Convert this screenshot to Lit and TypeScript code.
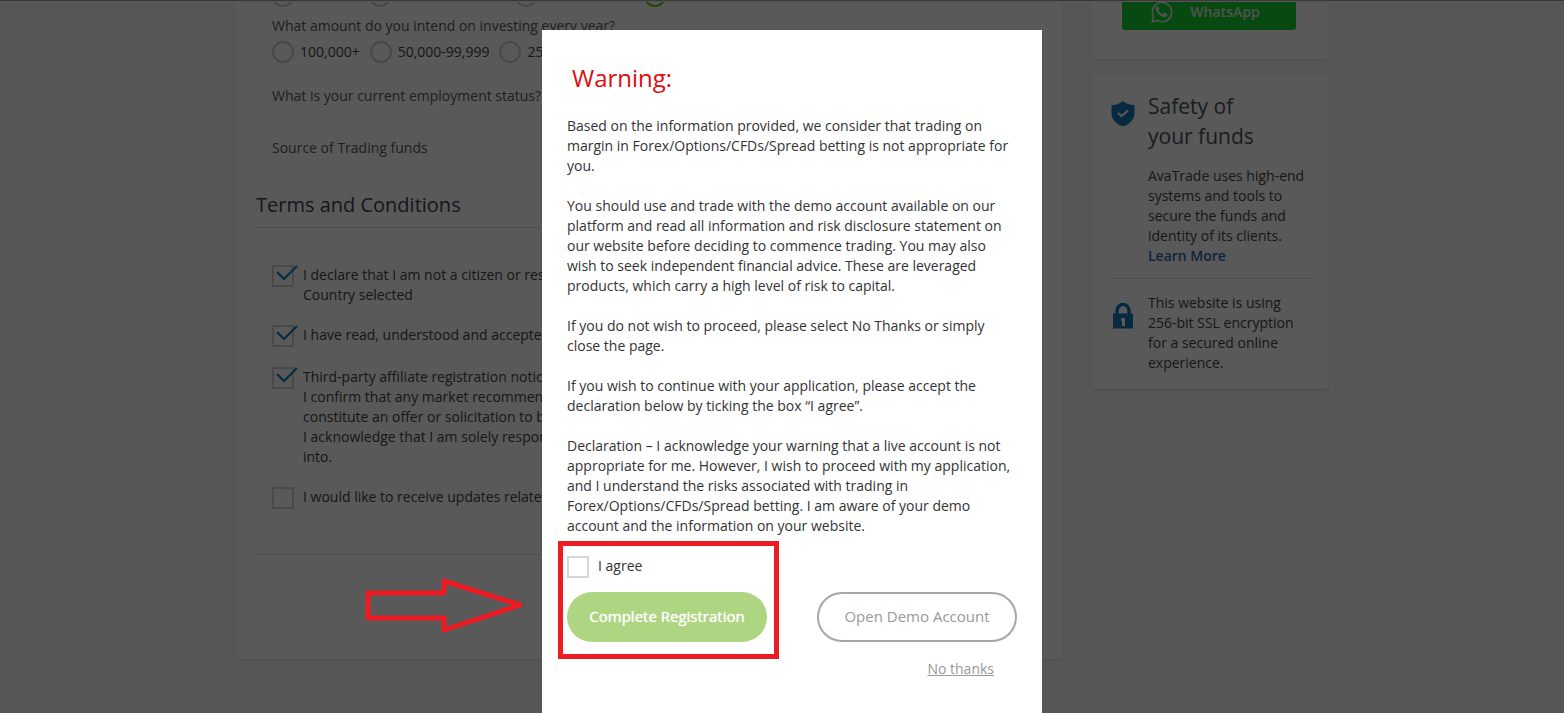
import { LitElement, html, css, svg } from "lit";
import { customElement, property, state } from "lit/decorators.js";

const base = css`
  *, *::before, *::after { box-sizing: border-box; }
  h2, h3, p { margin: 0; font-weight: 400; }
`;

@customElement("choice-row")
class ChoiceRow extends LitElement {
  @property() name = "";
  @property({ type: Array }) options: string[] = [];

  static styles = [base, css`
    :host { display: flex; gap: 10px; white-space: nowrap; }
    .choice { display: flex; align-items: center; gap: 6px; height: 22px; }
    .radio {
      appearance: none; flex: none; margin: 0;
      width: 22px; height: 22px; border: 2px solid #cdcdcd; border-radius: 50%;
    }
  `];

  render() {
    return this.options.map((text) => html`
      <label class="choice">
        <input class="radio" type="radio" name=${this.name} />
        <span>${text}</span>
      </label>`);
  }
}

@customElement("tick-item")
class TickItem extends LitElement {
  @property({ type: Boolean }) checked = false;

  static styles = [base, css`
    :host { display: block; }
    .item { display: grid; grid-template-columns: 22px 1fr; gap: 9px; }
    .box { position: relative; height: 22px; }
    .input {
      appearance: none; display: block; margin: 0;
      width: 22px; height: 22px; border: 2px solid #d2d2d2; background: transparent;
    }
    .mark { position: absolute; left: 4px; top: 0; width: 22px; height: 17px; display: none; pointer-events: none; }
    .input:checked + .mark { display: block; }
    .text { line-height: 20px; }
  `];

  render() {
    return html`
      <label class="item">
        <span class="box">
          <input class="input" type="checkbox" .checked=${this.checked} />
          <svg class="mark" viewBox="0 0 22 17" fill="none" stroke="#1779ba" stroke-width="2">
            <path d="M1 7 L8 14 L21 1" />
          </svg>
        </span>
        <span class="text"><slot></slot></span>
      </label>`;
  }
}

const whatsapp = svg`
  <path d="M2 22 L3.6 16.5 A9.6 9.6 0 1 1 7.4 20.4 Z" fill="none" stroke="#e4ece4" stroke-width="1.6" stroke-linejoin="round"/>
  <path d="M8.3 6.8c-.3-.6-.6-.6-.9-.6-.8 0-1.7.9-1.7 2.300 0 3.700 5 8.300 8.700 8.500 1.600 0 2.800-.9 3-2.300.1-.6 0-.8-.4-1l-2.200-1.100c-.4-.2-.7-.1-.9.2l-.9 1.100c-.2.3-.5.3-.8.1-1.900-.8-3-2.100-3.700-3.400-.2-.3 0-.5.2-.7.500-.5.900-1 .7-1.400z" fill="#e4ece4"/>`;

@customElement("safety-panel")
class SafetyPanel extends LitElement {
  static styles = [base, css`
    :host { display: flex; flex-direction: column; gap: 16px; }
    .card { background: #fff; border-radius: 3px; box-shadow: 0 1px 3px rgba(0, 0, 0, 0.1); }
    .contact { padding: 0 32px 29px 30px; border-radius: 0 0 3px 3px; }
    .whatsapp {
      display: flex; align-items: flex-end; justify-content: center; gap: 16px;
      width: 100%; height: 28px; padding: 0 8px 6px 0; border: 0; border-radius: 0 0 3px 3px;
      background: #14d133; color: #e4ece4; font: 600 14px/24px "Open Sans", sans-serif;
    }
    .phone { width: 24px; height: 24px; }
    .funds { padding: 16px 16px 16px; }
    .entry { display: grid; grid-template-columns: 30px 1fr; gap: 10px; line-height: 20px; }
    .entry + .entry { margin-top: 12px; padding-top: 14px; border-top: 1px solid #dcdcdc; }
    .icon { display: block; width: 24px; height: 26px; margin: 10px 0 0 3px; }
    .title { font-size: 21px; line-height: 30px; color: #4a535e; margin-bottom: 15px; }
    .link { font-weight: 600; color: #2c68a8; text-decoration: none; }
  `];

  render() {
    return html`
      <section class="card contact">
        <button class="whatsapp">
          <svg class="phone" viewBox="0 0 24 24">${whatsapp}</svg>WhatsApp
        </button>
      </section>
      <section class="card funds">
        <div class="entry">
          <svg class="icon" viewBox="0 0 24 26">
            <path d="M12 0C9 2.500 5.500 4 0.500 4.200V12C0.500 18.500 5 23 12 25.500C19 23 23.500 18.500 23.500 12V4.200C18.500 4 15 2.500 12 0Z" fill="#1779ba"/>
            <path d="M7 12 L10.500 15 L17 9.500" fill="none" stroke="#fff" stroke-width="2"/>
          </svg>
          <div>
            <h3 class="title">Safety of<br />your funds</h3>
            <p>AvaTrade uses high-end systems and tools to secure the funds and identity of its clients.
              <a class="link" href="#security">Learn More</a></p>
          </div>
        </div>
        <div class="entry">
          <svg class="icon" viewBox="0 0 24 26">
            <path d="M6 12V8A6 6.500 0 0 1 18 8V12" fill="none" stroke="#1779ba" stroke-width="3.500"/>
            <rect x="2" y="10.500" width="20" height="15" fill="#1779ba"/>
            <path d="M10 15h4v8h-3v-5h-1z" fill="#fff"/>
          </svg>
          <p>This website is using 256-bit SSL encryption for a secured online experience.</p>
        </div>
      </section>`;
  }
}

@customElement("warning-dialog")
class WarningDialog extends LitElement {
  @state() private agreed = false;

  static styles = [base, css`
    :host {
      display: block; width: 500px; padding: 30px 25px 34px 25px;
      background: #fff; color: #333; font-size: 14px; line-height: 20px;
    }
    .title { margin-left: 5px; font-size: 24px; line-height: 36px; color: #e00b0b; }
    .copy { display: flex; flex-direction: column; gap: 20px; margin-top: 20px; }
    .actions { display: flex; justify-content: space-between; align-items: flex-end; margin-top: 5px; }
    .marked { margin: 0 0 -17px -9px; padding: 10px 7px 12px 4px; border: 5px solid #ed1c24; }
    .agree { display: flex; gap: 9px; height: 22px; margin-bottom: 14px; }
    .agree input { appearance: none; margin: 0; width: 22px; height: 22px; border: 2px solid #d6d6d6; }
    .button {
      display: block; width: 200px; height: 50px; padding: 0 0 2px; border-radius: 25px;
      font: 400 15px/20px "Open Sans", sans-serif; cursor: pointer;
    }
    .complete { border: 0; background: #aed581; color: #fff; text-shadow: 0 0 1px #fff; }
    .demo { border: 2px solid #a6a6a6; background: #fff; color: #999; }
    .foot { display: flex; justify-content: flex-end; margin-top: 17px; padding-right: 23px; }
    .foot a { color: #999; }
  `];

  render() {
    return html`
      <h2 class="title">Warning:</h2>
      <div class="copy">
        <p>Based on the information provided, we consider that trading on margin in Forex/Options/CFDs/Spread betting is not appropriate for you.</p>
        <p>You should use and trade with the demo account available on our platform and read all information and risk disclosure statement on our website before deciding to commence trading. You may also wish to seek independent financial advice. These are leveraged products, which carry a high level of risk to capital.</p>
        <p>If you do not wish to proceed, please select No Thanks or simply close the page.</p>
        <p>If you wish to continue with your application, please accept the declaration below by ticking the box “I agree”.</p>
        <p>Declaration – I acknowledge your warning that a live account is not appropriate for me. However, I wish to proceed with my application, and I understand the risks associated with trading in Forex/Options/CFDs/Spread betting. I am aware of your demo account and the information on your website.</p>
      </div>
      <div class="actions">
        <div class="marked">
          <label class="agree">
            <input type="checkbox" .checked=${this.agreed}
              @change=${(e: Event) => (this.agreed = (e.target as HTMLInputElement).checked)} />
            <span>I agree</span>
          </label>
          <button class="button complete">Complete Registration</button>
        </div>
        <button class="button demo">Open Demo Account</button>
      </div>
      <div class="foot"><a href="#no">No thanks</a></div>`;
  }
}

@customElement("app-root")
class AppRoot extends LitElement {
  static styles = [base, css`
    :host {
      display: block; position: relative; min-height: 100vh; overflow: hidden;
      background: #f3f8f6; color: #444; font: 14px/20px "Open Sans", sans-serif;
      border-top: 1px solid #39393c;
    }
    .page {
      display: grid; grid-template-columns: 1fr 236px; gap: 30px; align-items: start;
      max-width: 1092px; margin: 0 auto; padding-top: 1px;
    }
    .form {
      padding: 0 20px 104px; background: #fff; border-radius: 0 0 3px 3px;
      box-shadow: 0 1px 3px rgba(0, 0, 0, 0.1);
    }
    .questions { padding-left: 16px; }
    .clipped {
      display: grid; grid-template-columns: 97px 146px 129px 22px; align-content: end;
      height: 5px; overflow: hidden;
    }
    .radio {
      appearance: none; margin: 0; width: 22px; height: 22px;
      border: 2px solid #cdcdcd; border-radius: 50%;
    }
    .radio:checked { border-color: #6dbb1a; }
    .question { margin-top: 9px; color: #5a5a5a; }
    .status { margin-top: 23px; color: #5a5a5a; }
    .source { margin-top: 32px; color: #5a5a5a; }
    .amounts { margin-top: 5px; }
    .heading {
      margin-top: 32px; padding-bottom: 7px; border-bottom: 1px solid #dcdcdc;
      font-size: 20px; line-height: 30px; color: #3c444c;
    }
    .terms { display: flex; flex-direction: column; gap: 20px; padding: 37px 16px 45px; border-bottom: 1px solid #dcdcdc; }
    .overlay {
      position: absolute; inset: 0; display: flex; justify-content: center; align-items: flex-start;
      padding: 29px 0 0 20px; background: rgba(0, 0, 0, 0.65);
    }
    .arrow { position: absolute; left: calc(50% - 418px); top: 576px; width: 160px; height: 56px; }
  `];

  render() {
    return html`
      <main class="page">
        <form class="form" @submit=${(e: Event) => e.preventDefault()}>
          <div class="questions">
            <div class="clipped">
              ${["500,000+", "100,000-499,999", "50,000-99,999", "0-49,999"].map((range, i) => html`
                <input class="radio" type="radio" name="savings" aria-label=${range} .checked=${i === 3} />`)}
            </div>
            <p class="question">What amount do you intend on investing every year?</p>
            <choice-row class="amounts" name="amount"
              .options=${["100,000+", "50,000-99,999", "25,000-49,999"]}></choice-row>
            <p class="status">What is your current employment status?</p>
            <p class="source">Source of Trading funds</p>
          </div>
          <h2 class="heading">Terms and Conditions</h2>
          <div class="terms">
            <tick-item checked>I declare that I am not a citizen or resident<br />Country selected</tick-item>
            <tick-item checked>I have read, understood and accepted</tick-item>
            <tick-item checked>Third-party affiliate registration notice<br />I confirm that any market recommendation<br />constitute an offer or solicitation to buy<br />I acknowledge that I am solely responsible<br />into.</tick-item>
            <tick-item>I would like to receive updates related</tick-item>
          </div>
        </form>
        <safety-panel></safety-panel>
      </main>
      <div class="overlay">
        <warning-dialog role="dialog" aria-label="Warning"></warning-dialog>
        <svg class="arrow" viewBox="0 0 160 56" fill="none" stroke="#ed1c24" stroke-width="5" stroke-linejoin="round">
          <path d="M4 16H80V4L156 28L80 53V41H4Z" />
        </svg>
      </div>`;
  }
}
